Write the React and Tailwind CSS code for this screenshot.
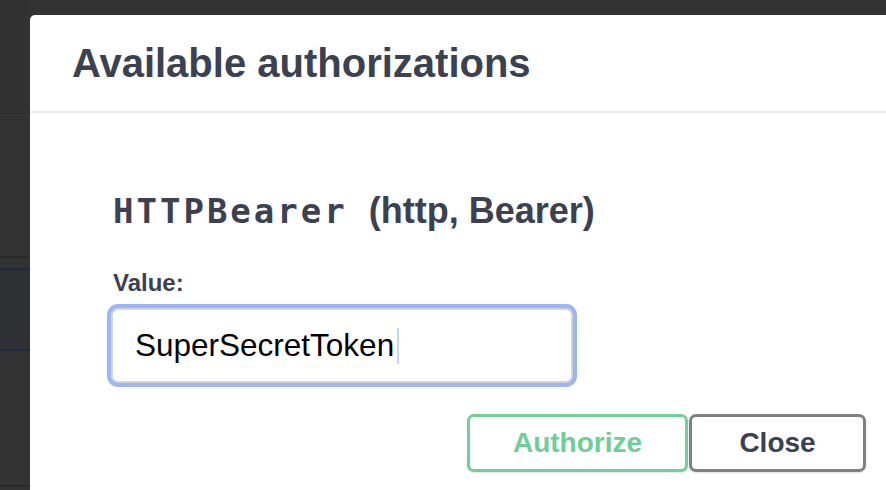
export default function App() {
  const sans = { fontFamily: '"Liberation Sans", Arial, sans-serif' };
  return (
    <div className="h-[490px] w-[886px] overflow-hidden bg-[#333333] flex" style={sans}>
      <div className="w-[30px] shrink-0 flex flex-col">
        <div className="h-[113px] bg-[#323232]" />
        <div className="h-[1px] bg-[#2e2e2e]" />
        <div className="h-[142px] bg-[#333333]" />
        <div className="h-[2px] bg-[#2a2a2a]" />
        <div className="h-[10px] bg-[#333333]" />
        <div className="h-[2px] bg-[#1c2a3c]" />
        <div className="h-[79px] bg-[#2f3034]" />
        <div className="h-[2px] bg-[#1c2a3c]" />
        <div className="h-[134px] bg-[#333333]" />
        <div className="h-[2px] bg-[#2a2a2a]" />
        <div className="flex-1 bg-[#333333]" />
      </div>
      <div className="shrink-0 pt-[15px]">
        <div className="w-[900px] h-[475px] bg-white rounded-tl-[5px]">
          <div className="h-[98px] border-b-2 border-[#ebebeb] flex items-center pl-[42px]">
            <h2 className="text-[40px] font-bold text-[#3b4151] leading-none">Available authorizations</h2>
          </div>
          <div className="pl-[77px] pt-[78px]">
            <h4 className="h-[40px] flex items-center text-[#3b4151] font-bold pl-[6px]">
              <code className="text-[34px] tracking-[3px]" style={{ fontFamily: '"DejaVu Sans Mono", monospace' }}>HTTPBearer</code>
              <span className="text-[36px] ml-[21px]">(http, Bearer)</span>
            </h4>
            <div className="mt-[37px] h-[30px] flex items-center pl-[6px] text-[24px] font-bold text-[#3b4151]">Value:</div>
            <div className="mt-[6px] w-[470px] h-[83px] rounded-[11px] bg-[#9bb6f6] p-[4px]">
              <div className="h-full w-full rounded-[7px] border-2 border-[#d4d4d4] bg-white flex items-center pl-[22px] text-[31.5px] text-black">
                <span>SuperSecretToken</span>
                <span className="ml-[3px] w-[2px] h-[36px] bg-[#c6d6f6]" />
              </div>
            </div>
          </div>
          <div className="mt-[27px] flex pl-[437px] gap-[1px]">
            <button className="w-[221px] h-[58px] rounded-[7px] border-[3px] border-[#75cd9b] text-[#6fcd97] text-[28px] font-bold bg-white shadow-[0_1px_2px_rgba(0,0,0,0.12)]">Authorize</button>
            <button className="w-[177px] h-[58px] rounded-[7px] border-[3px] border-[#808080] text-[#3b4151] text-[28px] font-bold bg-white shadow-[0_1px_2px_rgba(0,0,0,0.12)]">Close</button>
          </div>
        </div>
      </div>
    </div>
  );
}
